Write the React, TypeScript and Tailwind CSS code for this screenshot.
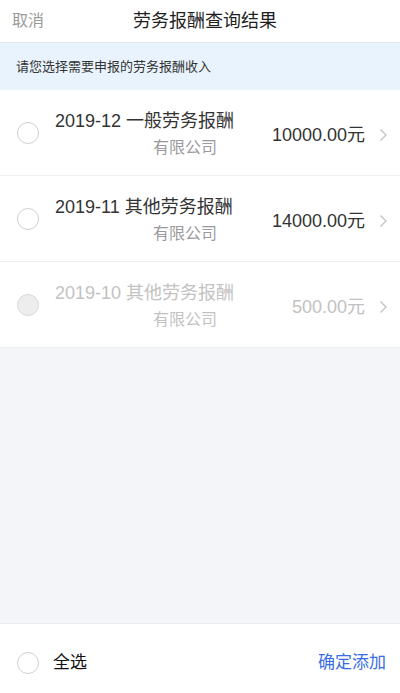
import React from 'react';

type Item = {
  title: string;
  company: string;
  amount: string;
  disabled?: boolean;
};

const items: Item[] = [
  { title: '2019-12 一般劳务报酬', company: '有限公司', amount: '10000.00元' },
  { title: '2019-11 其他劳务报酬', company: '有限公司', amount: '14000.00元' },
  { title: '2019-10 其他劳务报酬', company: '有限公司', amount: '500.00元', disabled: true },
];

function Radio({ disabled }: { disabled?: boolean }) {
  return (
    <div
      className={
        disabled
          ? 'w-[22px] h-[22px] shrink-0 rounded-full border border-[#d9d9d9] bg-[#ededed]'
          : 'w-[22px] h-[22px] shrink-0 rounded-full border border-[#d0d0d4] bg-white'
      }
    />
  );
}

function Chevron() {
  return (
    <svg width="9" height="14" viewBox="0 0 9 14" className="shrink-0">
      <polyline points="1.5,1.5 7,7 1.5,12.5" fill="none" stroke="#c4c4c8" strokeWidth="1.4" />
    </svg>
  );
}

function Row({ item }: { item: Item }) {
  const main = item.disabled ? 'text-[#c2c2c2]' : 'text-[#333]';
  const sub = item.disabled ? 'text-[#c2c2c2]' : 'text-[#9a9a9e]';
  return (
    <div className="flex items-center bg-white border-b border-[#f0f0f2] pl-[17px] pr-[12px]">
      <Radio disabled={item.disabled} />
      <div className="flex-1 ml-[16px] pt-[18px] pb-[13px]">
        <div className={`text-[18px] leading-[26px] ${main}`}>{item.title}</div>
        <div className={`text-[16px] leading-[28px] pl-[98px] ${sub}`}>{item.company}</div>
      </div>
      <div className="flex items-center pt-[5px]">
        <div className={`text-[18px] ${main}`}>{item.amount}</div>
        <div className="ml-[14px] flex items-center">
          <Chevron />
        </div>
      </div>
    </div>
  );
}

export default function App() {
  return (
    <div
      className="w-[400px] h-[693px] flex flex-col bg-[#f4f5f9] overflow-hidden"
      style={{ fontFamily: '"Liberation Sans", "Noto Sans CJK SC", sans-serif' }}
    >
      {/* Header */}
      <div className="h-[43px] shrink-0 flex items-center bg-white border-b border-[#e6e8eb]">
        <div className="w-[60px] pl-3 text-[16px] text-[#9a9a9a]">取消</div>
        <div className="flex-1 text-center text-[18px] text-[#1f1f1f]">劳务报酬查询结果</div>
        <div className="w-[50px]" />
      </div>

      {/* Tip */}
      <div className="h-[47px] shrink-0 flex items-center px-4 bg-[#e9f3fd] text-[13px] text-[#333]">
        请您选择需要申报的劳务报酬收入
      </div>

      {/* List */}
      <div className="shrink-0">
        {items.map((item) => (
          <Row key={item.title} item={item} />
        ))}
      </div>

      <div className="flex-1" />

      {/* Footer */}
      <div className="h-[70px] shrink-0 flex items-center bg-white border-t border-[#ebebee] pl-[17px] pr-[14px] pt-[8px]">
        <Radio />
        <div className="ml-[14px] text-[17px] text-[#111]">全选</div>
        <div className="flex-1" />
        <div className="text-[17px] text-[#3a6de3]">确定添加</div>
      </div>
    </div>
  );
}
